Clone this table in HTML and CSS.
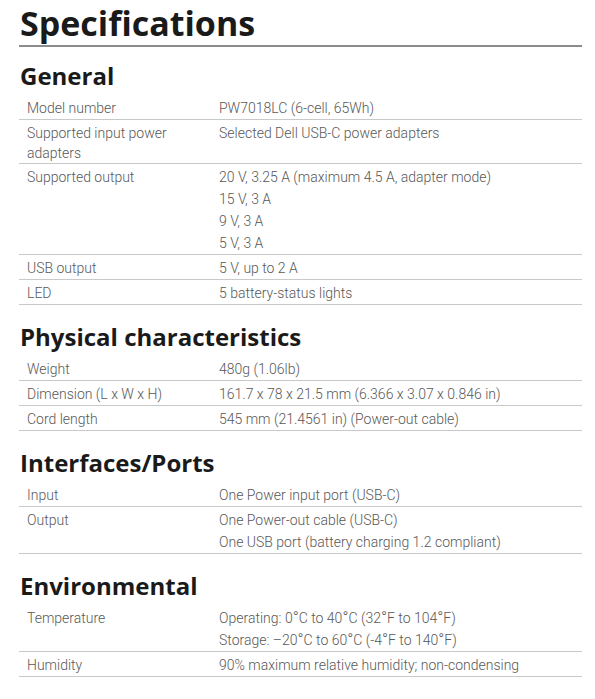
FILE: index.html
```html
<!DOCTYPE html>
<html lang="en">
<head>
<meta charset="utf-8">
<title>Specifications</title>
<link rel="stylesheet" href="styles.css">
</head>
<body>
<main class="page">
  <h1 class="title">Specifications</h1>

  <section class="section">
    <h2 class="heading">General</h2>
    <div class="row">
      <div class="label">Model number</div>
      <div class="value"><p>PW7018LC (6-cell, 65Wh)</p></div>
    </div>
    <div class="row">
      <div class="label">Supported input power adapters</div>
      <div class="value"><p>Selected Dell USB-C power adapters</p></div>
    </div>
    <div class="row">
      <div class="label">Supported output</div>
      <div class="value">
        <p>20 V, 3.25 A (maximum 4.5 A, adapter mode)</p>
        <p>15 V, 3 A</p>
        <p>9 V, 3 A</p>
        <p>5 V, 3 A</p>
      </div>
    </div>
    <div class="row">
      <div class="label">USB output</div>
      <div class="value"><p>5 V, up to 2 A</p></div>
    </div>
    <div class="row">
      <div class="label">LED</div>
      <div class="value"><p>5 battery-status lights</p></div>
    </div>
  </section>

  <section class="section">
    <h2 class="heading">Physical characteristics</h2>
    <div class="row">
      <div class="label">Weight</div>
      <div class="value"><p>480g (1.06lb)</p></div>
    </div>
    <div class="row">
      <div class="label">Dimension (L x W x H)</div>
      <div class="value"><p>161.7 x 78 x 21.5 mm (6.366 x 3.07 x 0.846 in)</p></div>
    </div>
    <div class="row">
      <div class="label">Cord length</div>
      <div class="value"><p>545 mm (21.4561 in) (Power-out cable)</p></div>
    </div>
  </section>

  <section class="section">
    <h2 class="heading">Interfaces/Ports</h2>
    <div class="row">
      <div class="label">Input</div>
      <div class="value"><p>One Power input port (USB-C)</p></div>
    </div>
    <div class="row">
      <div class="label">Output</div>
      <div class="value">
        <p>One Power-out cable (USB-C)</p>
        <p>One USB port (battery charging 1.2 compliant)</p>
      </div>
    </div>
  </section>

  <section class="section">
    <h2 class="heading">Environmental</h2>
    <div class="row">
      <div class="label">Temperature</div>
      <div class="value">
        <p>Operating: 0<span class="deg">°</span>C to 40<span class="deg">°</span>C (32<span class="deg">°</span>F to 104<span class="deg">°</span>F)</p>
        <p>Storage: –20<span class="deg">°</span>C to 60<span class="deg">°</span>C (-4<span class="deg">°</span>F to 140<span class="deg">°</span>F)</p>
      </div>
    </div>
    <div class="row">
      <div class="label">Humidity</div>
      <div class="value"><p>90% maximum relative humidity; non-condensing</p></div>
    </div>
  </section>
</main>
</body>
</html>
```

FILE: styles.css
```css
html, body {
  margin: 0;
  padding: 0;
  background: #ffffff;
}

.page {
  padding: 0 13px 0 19px;
  font-family: Roboto, "Liberation Sans", sans-serif;
  font-weight: 300;
  font-size: 14px;
  color: #585858;
}

.title {
  margin: 0;
  padding: 2px 0 0 1px;
  font-family: "Open Sans", "Liberation Sans", sans-serif;
  font-weight: 700;
  font-size: 34px;
  line-height: 43px;
  color: #1a1a1a;
  border-bottom: 2px solid #8c8c8c;
}

.section {
  display: flex;
  flex-direction: column;
}

.heading {
  margin: 18px 0 5px;
  padding-left: 1px;
  font-family: "Open Sans", "Liberation Sans", sans-serif;
  font-weight: 700;
  font-size: 24px;
  line-height: 28px;
  color: #1a1a1a;
}

.title + .section .heading {
  margin-top: 15px;
}

.row {
  display: grid;
  grid-template-columns: 200px 1fr;
  padding: 2px 0 0;
  border-bottom: 1px solid #c9c9c9;
}

.label {
  padding: 1px 8px 0 8px;
  line-height: 20px;
}

.value p {
  margin: 0;
  line-height: 22px;
  white-space: nowrap;
}

.deg {
  font-size: 16px;
  line-height: 0;
}
```
